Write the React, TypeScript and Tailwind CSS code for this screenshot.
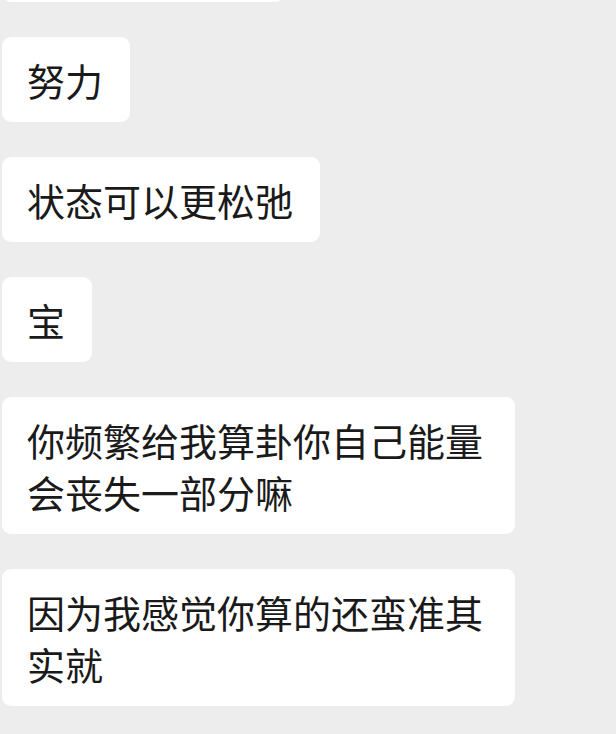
import React from "react";

const messages: { text: string; wide?: boolean }[] = [
  { text: "努力" },
  { text: "状态可以更松弛" },
  { text: "宝" },
  { text: "你频繁给我算卦你自己能量会丧失一部分嘛", wide: true },
  { text: "因为我感觉你算的还蛮准其实就", wide: true },
];

export default function App() {
  return (
    <div
      className="h-[734px] w-[616px] overflow-hidden bg-[#ededed]"
      style={{ fontFamily: '"Noto Sans CJK SC", "Noto Sans", sans-serif' }}
    >
      <div className="flex flex-col items-start gap-[35px] pl-[2px]">
        {/* cut-off bubble at the top edge */}
        <div className="-mt-[38px] h-[40px] w-[282px] rounded-[9px] bg-white" />
        {messages.map((m, i) => (
          <Bubble key={i} text={m.text} wide={m.wide} />
        ))}
      </div>
    </div>
  );
}

function Bubble({ text, wide }: { text: string; wide?: boolean }) {
  return (
    <div
      className={`rounded-[9px] bg-white pl-[25px] pr-[27px] py-[16.5px] text-[38px] leading-[52px] text-[#1a1a1a] ${
        wide ? "w-[513px]" : ""
      }`}
    >
      {text}
    </div>
  );
}
